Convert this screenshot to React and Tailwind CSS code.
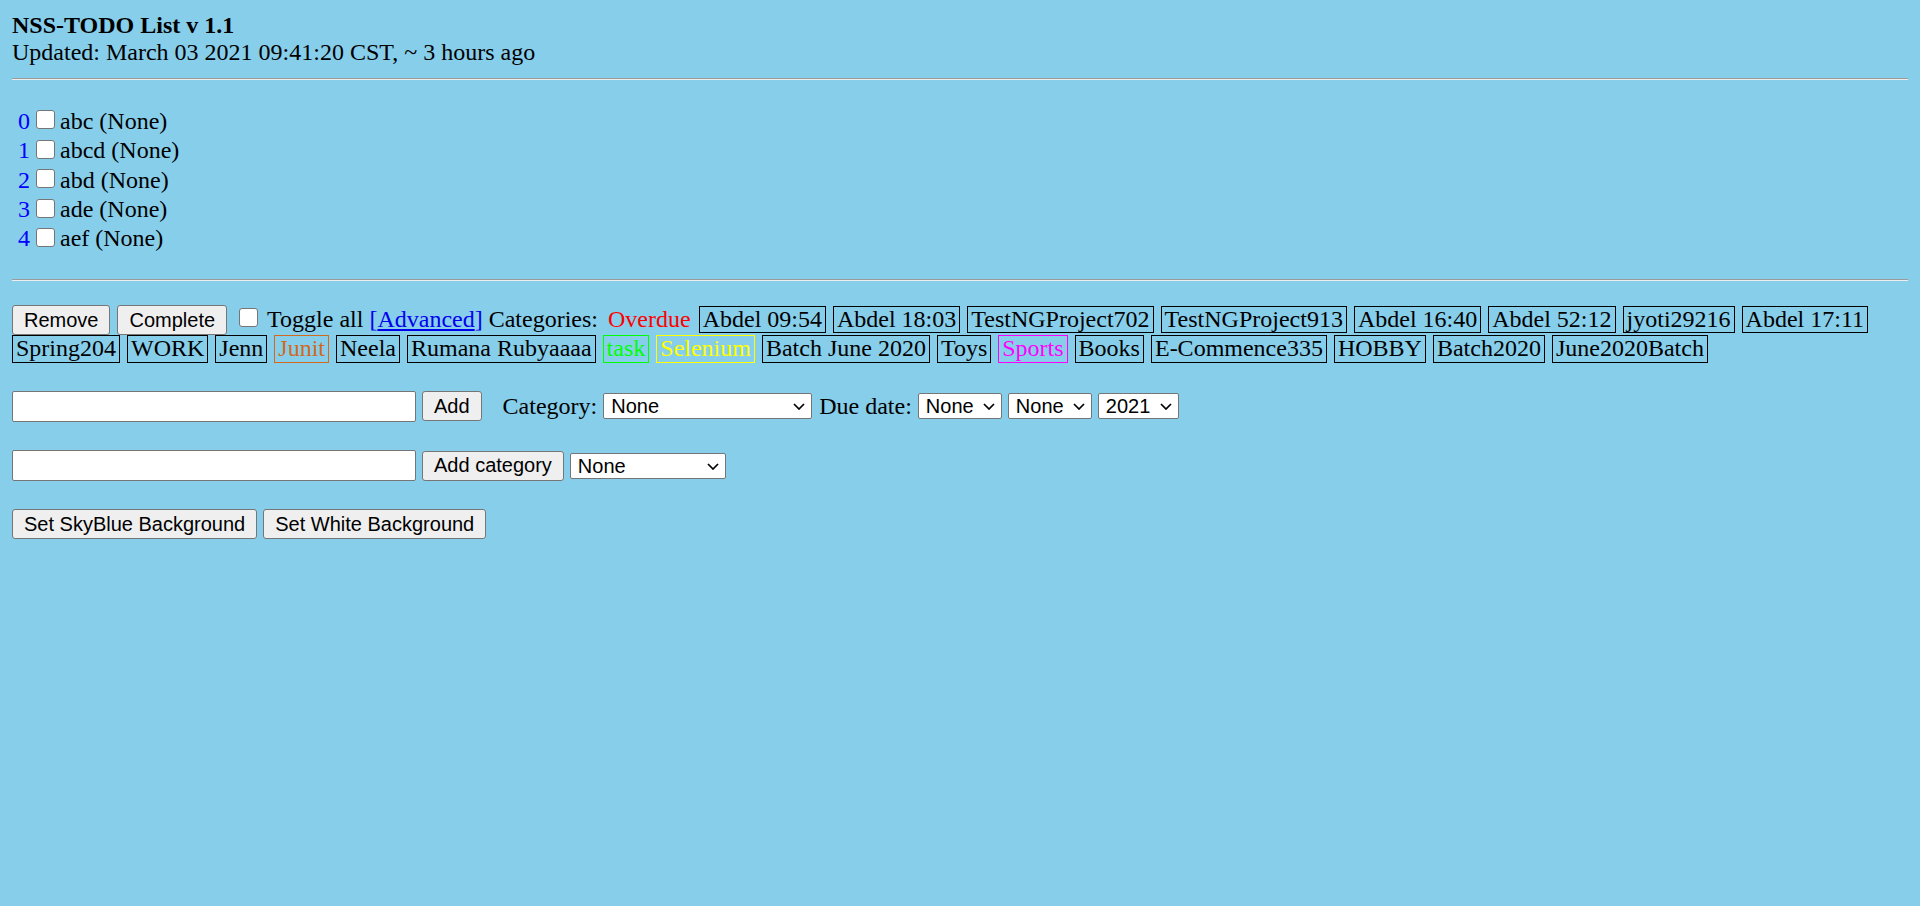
import React from 'react';

const todos = ['abc', 'abcd', 'abd', 'ade', 'aef'];

const tagColors = {
  black: 'text-black border-black',
  chocolate: 'text-[#d2691e] border-[#d2691e]',
  lime: 'text-[#00ff00] border-[#00ff00]',
  yellow: 'text-[#ffff00] border-[#ffff00]',
  magenta: 'text-[#ff00ff] border-[#ff00ff]',
};

const categories = [
  ['Abdel 09:54', 'black'],
  ['Abdel 18:03', 'black'],
  ['TestNGProject702', 'black'],
  ['TestNGProject913', 'black'],
  ['Abdel 16:40', 'black'],
  ['Abdel 52:12', 'black'],
  ['jyoti29216', 'black'],
  ['Abdel 17:11', 'black'],
  ['Spring204', 'black'],
  ['WORK', 'black'],
  ['Jenn', 'black'],
  ['Junit', 'chocolate'],
  ['Neela', 'black'],
  ['Rumana Rubyaaaa', 'black'],
  ['task', 'lime'],
  ['Selenium', 'yellow'],
  ['Batch June 2020', 'black'],
  ['Toys', 'black'],
  ['Sports', 'magenta'],
  ['Books', 'black'],
  ['E-Commence335', 'black'],
  ['HOBBY', 'black'],
  ['Batch2020', 'black'],
  ['June2020Batch', 'black'],
];

const Btn = ({ children, className = '' }) => (
  <button
    className={`h-[30px] px-[11px] border border-[#767676] rounded-[3px] bg-[#efefef] font-['Liberation_Sans',Arial,sans-serif] text-[20px] leading-[23px] text-black whitespace-nowrap ${className}`}
  >
    {children}
  </button>
);

const Select = ({ value = 'None', className = '' }) => (
  <div className={`relative h-[26px] ${className}`}>
    <select className="block appearance-none w-full h-[26px] border border-[#767676] rounded-[2px] bg-white pl-[7px] pr-[24px] font-['Liberation_Sans',Arial,sans-serif] text-[20px] leading-[22px] text-black">
      <option>{value}</option>
    </select>
    <svg
      className="absolute right-[7px] top-[10px] pointer-events-none"
      width="12"
      height="7"
      viewBox="0 0 12 7"
    >
      <path d="M1 1l5 5 5-5" fill="none" stroke="#000" strokeWidth="1.7" />
    </svg>
  </div>
);

const TextBox = () => (
  <input
    type="text"
    className="block w-[404px] h-[31px] border border-[#767676] rounded-[2px] bg-white"
  />
);

const App = () => {
  return (
    <div className="min-h-screen bg-[#87ceeb] p-[12px] font-['Liberation_Serif','Times_New_Roman',serif] text-[24px] leading-[25.6px] text-black">
      <div className="leading-[26.7px]">
        <div className="font-bold">NSS-TODO List v 1.1</div>
        <div>Updated: March 03 2021 09:41:20 CST, ~ 3 hours ago</div>
      </div>

      <hr className="mt-[12.5px] border-t border-b border-t-[#9a9a9a] border-b-[#eeeeee]" />

      <div className="mt-[27px]">
        {todos.map((todo, index) => (
          <div key={index} className="flex items-start h-[29.4px] leading-[29.4px]">
            <span className="ml-[6px] w-[12px] text-[#0000ff]">{index}</span>
            <input
              type="checkbox"
              className="appearance-none w-[19px] h-[19px] ml-[6px] mt-[3.5px] border border-[#767676] rounded-[3px] bg-white"
            />
            <span className="ml-[5px]">{todo} (None)</span>
          </div>
        ))}
      </div>

      <hr className="mt-[25.5px] border-t border-b border-t-[#9a9a9a] border-b-[#eeeeee]" />

      {/* toolbar + categories */}
      <div className="mt-[24px] flex flex-wrap items-baseline">
        <Btn className="mr-[7px]">Remove</Btn>
        <Btn className="mr-[12px]">Complete</Btn>
        <input
          type="checkbox"
          className="appearance-none self-start mt-[2.6px] w-[19px] h-[19px] mr-[9px] border border-[#767676] rounded-[3px] bg-white"
        />
        <span className="whitespace-pre">
          Toggle all{' '}
          <span className="text-[#0000ee]">
            [<a href="#" className="underline">Advanced</a>]
          </span>{' '}
          Categories:
        </span>
        <span className="ml-[6px] mr-[4px] px-[3px] border border-transparent text-[#ff0000]">Overdue</span>
        {categories.map(([name, color], index) => (
          <span key={index} className={`mr-[7px] px-[3px] border whitespace-nowrap ${tagColors[color]}`}>
            {name}
          </span>
        ))}
      </div>

      <div className="mt-[28px] flex items-center">
        <TextBox />
        <Btn className="ml-[6px]">Add</Btn>
        <span className="ml-[21px]">Category:</span>
        <Select className="ml-[6px] w-[209px]" />
        <span className="ml-[7px]">Due date:</span>
        <Select className="ml-[6px] w-[84px]" />
        <Select className="ml-[6px] w-[84px]" />
        <Select className="ml-[6px] w-[81px]" value="2021" />
      </div>

      <div className="mt-[28.4px] flex items-center">
        <TextBox />
        <Btn className="ml-[6px]">Add category</Btn>
        <Select className="ml-[6px] w-[156px]" />
      </div>

      <div className="mt-[28px] flex items-center">
        <Btn className="bg-[#e5e5e5] border-[#4f4f4f]">Set SkyBlue Background</Btn>
        <Btn className="ml-[6px]">Set White Background</Btn>
      </div>
    </div>
  );
};

export default App;
